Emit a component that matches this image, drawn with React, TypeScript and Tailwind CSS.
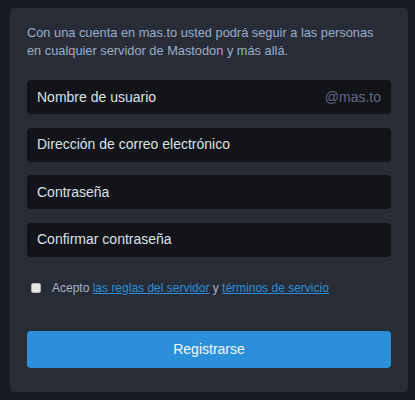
import React from "react";

const fields = [
  { label: "Nombre de usuario", suffix: "@mas.to" },
  { label: "Dirección de correo electrónico" },
  { label: "Contraseña" },
  { label: "Confirmar contraseña" },
];

const App = () => {
  return (
    <div className="w-[415px] h-[400px] bg-[#191b22] pt-[8px] pl-[10px] font-['Liberation_Sans',Arial,sans-serif]">
      <div className="w-[398px] h-[384px] bg-[#282c37] rounded-[4px] px-[17px] pt-[16px]">
        <p className="text-[12.8px] leading-[18px] text-[#9baec8]">
          Con una cuenta en mas.to usted podrá seguir a las personas en cualquier servidor de Mastodon y más allá.
        </p>

        <div className="mt-[20px] flex flex-col gap-[13.5px]">
          {fields.map((f) => (
            <div
              key={f.label}
              className="h-[34px] rounded-[4px] bg-[#131419] flex items-center justify-between px-[10px] text-[14px]"
            >
              <span className="text-[#d9e1e8]">{f.label}</span>
              {f.suffix && <span className="text-[#606984]">{f.suffix}</span>}
            </div>
          ))}
        </div>

        <div className="mt-[22px] h-[18px] flex items-center pl-[4px] text-[12px] text-[#a8b3c6]">
          <span className="w-[10px] h-[10px] rounded-[2px] bg-[#e6e6e6] border border-[#b5b5b5] mr-[11px]" />
          <span>
            Acepto{" "}
            <a className="text-[#2b90d9] underline">las reglas del servidor</a> y{" "}
            <a className="text-[#2b90d9] underline">términos de servicio</a>
          </span>
        </div>

        <button className="mt-[34px] w-full h-[37px] rounded-[4px] bg-[#2b90d9] text-[14px] text-[#f4f7fa]">
          Registrarse
        </button>
      </div>
    </div>
  );
};

export default App;
